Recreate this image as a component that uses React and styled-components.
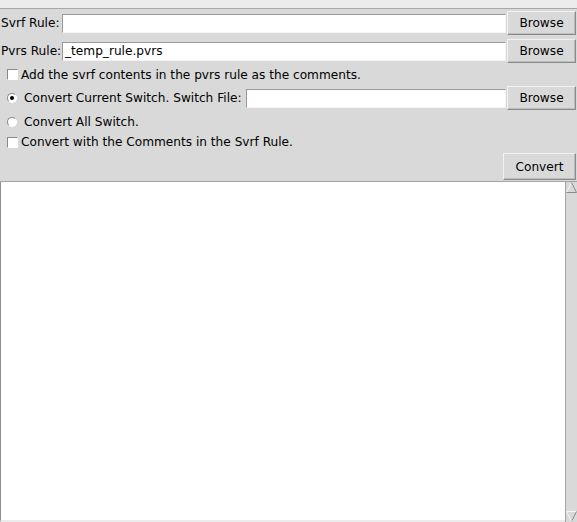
import React from "react";
import styled, { createGlobalStyle } from "styled-components";

const Global = createGlobalStyle`
  html, body {
    margin: 0;
    padding: 0;
    background: #d9d9d9;
    font-family: "DejaVu Sans", "Liberation Sans", sans-serif;
    font-size: 12.15px;
    color: #000;
  }
`;

const Window = styled.div`
  width: 577px;
  height: 522px;
  display: flex;
  flex-direction: column;
  overflow: hidden;
`;

const TopStrip = styled.div`
  height: 8px;
  background: #ececec;
  border-bottom: 1px solid #a8a8a8;
  flex: none;
`;

const Row = styled.div`
  display: flex;
  align-items: center;
  height: ${(p) => p.h}px;
  flex: none;
  padding-right: 1px;
`;

const Label = styled.span`
  width: ${(p) => (p.w ? `${p.w}px` : "auto")};
  padding-left: 1px;
  white-space: nowrap;
  flex: none;
`;

const Entry = styled.div`
  flex: 1;
  height: 19px;
  box-sizing: border-box;
  margin-left: ${(p) => p.gap || 0}px;
  background: #fff;
  border: 1px solid;
  border-color: #9a9a9a #f4f4f4 #f4f4f4 #9a9a9a;
  padding-left: 2px;
  line-height: 17px;
  white-space: nowrap;
  overflow: hidden;
`;

const Button = styled.div`
  flex: none;
  width: ${(p) => p.w}px;
  height: ${(p) => p.h}px;
  box-sizing: border-box;
  margin-left: 1px;
  display: flex;
  align-items: center;
  justify-content: center;
  background: #d9d9d9;
  border: 1px solid;
  border-color: #f2f2f2 #8a8a8a #8a8a8a #f2f2f2;
  box-shadow: inset -1px -1px 0 #bdbdbd;
`;

const Check = styled.span`
  width: 11px;
  height: 11px;
  box-sizing: border-box;
  margin: 0 3px 0 7px;
  background: #fff;
  border: 1px solid;
  border-color: #8a8a8a #fff #fff #8a8a8a;
  flex: none;
`;

const Radio = styled.span`
  position: relative;
  width: 10px;
  height: 10px;
  box-sizing: border-box;
  margin: 0 7px 0 7px;
  border-radius: 50%;
  background: #fff;
  border: 1px solid;
  border-color: #8a8a8a #fff #fff #8a8a8a;
  flex: none;
  &::after {
    content: "";
    display: ${(p) => (p.on ? "block" : "none")};
    position: absolute;
    left: 2px;
    top: 2px;
    width: 4px;
    height: 4px;
    border-radius: 50%;
    background: #000;
  }
`;

const Spacer = styled.div`
  flex: 1;
`;

const TextPane = styled.div`
  flex: 1;
  display: flex;
  min-height: 0;
  border-top: 1px solid #a3a3a3;
`;

const TextArea = styled.div`
  flex: 1;
  background: #fff;
  border-left: 1px solid #8e8e8e;
  border-bottom: 2px solid #ececec;
`;

const Scrollbar = styled.div`
  width: 12px;
  flex: none;
  display: flex;
  flex-direction: column;
  background: #d9d9d9;
  border-left: 1px solid #a3a3a3;
  box-sizing: border-box;
`;

const Trough = styled.div`
  flex: 1;
`;

const Arrow = ({ down }) => (
  <svg width="11" height="11" viewBox="0 0 11 11" style={{ display: "block" }}>
    {down ? (
      <>
        <polygon points="0.5,0.5 10.5,0.5 5.5,10.5" fill="#d9d9d9" />
        <polyline points="0.5,0.5 10.5,0.5" fill="none" stroke="#f4f4f4" />
        <polyline points="10.5,0.5 5.5,10.5" fill="none" stroke="#8a8a8a" />
        <polyline points="0.5,0.5 5.5,10.5" fill="none" stroke="#f4f4f4" />
      </>
    ) : (
      <>
        <polygon points="5.5,0.5 10.5,10.5 0.5,10.5" fill="#d9d9d9" />
        <polyline points="0.5,10.5 5.5,0.5" fill="none" stroke="#f4f4f4" />
        <polyline points="5.5,0.5 10.5,10.5 0.5,10.5" fill="none" stroke="#8a8a8a" />
      </>
    )}
  </svg>
);

export default function App() {
  return (
    <Window>
      <Global />
      <TopStrip />
      <Row h={28}>
        <Label w={61}>Svrf Rule:</Label>
        <Entry />
        <Button w={69} h={24}>Browse</Button>
      </Row>
      <Row h={28}>
        <Label w={61}>Pvrs Rule:</Label>
        <Entry>_temp_rule.pvrs</Entry>
        <Button w={69} h={24}>Browse</Button>
      </Row>
      <Row h={19}>
        <Check />
        <span>Add the svrf contents in the pvrs rule as the comments.</span>
      </Row>
      <Row h={28}>
        <Radio on />
        <span>Convert Current Switch. Switch File:</span>
        <Entry gap={4} />
        <Button w={69} h={24}>Browse</Button>
      </Row>
      <Row h={20}>
        <Radio />
        <span>Convert All Switch.</span>
      </Row>
      <Row h={20}>
        <Check />
        <span>Convert with the Comments in the Svrf Rule.</span>
      </Row>
      <Row h={29}>
        <Spacer />
        <Button w={73} h={27}>Convert</Button>
      </Row>
      <TextPane>
        <TextArea />
        <Scrollbar>
          <Arrow />
          <Trough />
          <Arrow down />
        </Scrollbar>
      </TextPane>
    </Window>
  );
}
